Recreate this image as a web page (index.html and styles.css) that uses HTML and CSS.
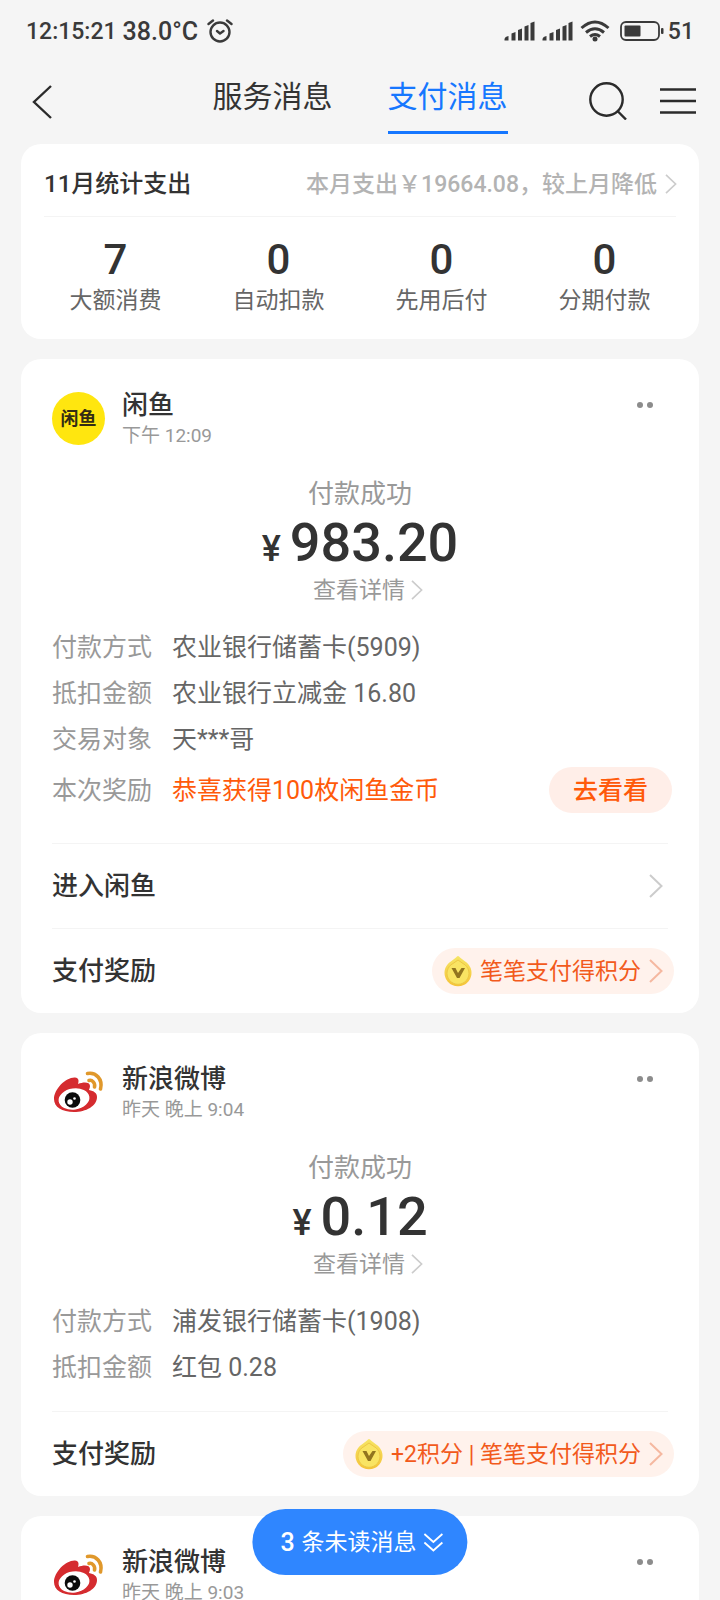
FILE: index.html
```html
<!DOCTYPE html>
<html lang="zh-CN">
<head>
<meta charset="utf-8">
<meta name="viewport" content="width=device-width, initial-scale=1">
<title>支付消息</title>
<link rel="stylesheet" href="styles.css">
</head>
<body>
<svg class="defs" aria-hidden="true">
  <defs>
    <linearGradient id="gold" x1="0" y1="0" x2="0" y2="1">
      <stop offset="0" stop-color="#f6e565"/>
      <stop offset="1" stop-color="#f5c338"/>
    </linearGradient>
    <symbol id="signal" viewBox="0 0 31 20">
      <path d="M.5 19.500V18Q1 15.500 4.500 15V19.500ZM7.500 12.500L11.500 11V19.500H7.500ZM14 9L18 7.500V19.500H14ZM20.500 5.500L24.500 4V19.500H20.500ZM26.500 2L30.500 .500V19.500H26.500Z" fill="#3a3a3a"/>
    </symbol>
    <symbol id="next" viewBox="0 0 14 24">
      <path d="M1 1L12.500 12L1 23" fill="none" stroke="currentColor" stroke-width="2"/>
    </symbol>
    <symbol id="coin" viewBox="0 0 28 32">
      <path d="M14 1Q15 1 16 2.500L20.500 6A13.500 13.500 0 1 1 7.500 6L12 2.500Q13 1 14 1Z" fill="url(#gold)"/>
      <path d="M14 5L19 8.500A11 11 0 1 1 9 8.500Z" fill="#f9e463" stroke="#edc744" stroke-width="1"/>
      <path d="M7.500 13H11.500L14 18L17.500 13H21L15.500 23H13Z" fill="#92751f"/>
    </symbol>
    <symbol id="weibo" viewBox="0 0 53 53">
      <path d="M2 33C2 23 14 11 23 11.500C27 12 27 15 26 18C32 15.500 38 16 38 20C38 22 37 23 37 24C42 25 45 27 45 31C45 40 34 46 22 46C10 46 2 41 2 33Z" fill="#d52b2f"/>
      <ellipse cx="22" cy="33" rx="15.500" ry="10.500" transform="rotate(-8 22 33)" fill="#fff"/>
      <circle cx="20.500" cy="34" r="7.800" fill="#0b0b0b"/>
      <circle cx="18" cy="36" r="2.700" fill="#fff"/>
      <circle cx="22.500" cy="32.500" r="1.300" fill="#fff"/>
      <path d="M35.500 7.500C44 6 51 13 48.500 23M37 14.500C40 13.500 43.500 17 42.500 21" fill="none" stroke="#e0982b" stroke-width="3.600" stroke-linecap="round"/>
    </symbol>
  </defs>
</svg>

<div class="status">
  <span class="status-time">12:15:21</span>
  <span class="status-temp">38.0°C</span>
  <svg class="alarm" viewBox="0 0 26 24" aria-hidden="true"><g fill="none" stroke="#3a3a3a" stroke-width="2.400" stroke-linecap="round" stroke-linejoin="round"><circle cx="13" cy="13" r="9.500"/><path d="M10 12L13 14.500L16.500 12M1.500 5L6 1.500M24.500 5L20 1.500"/></g></svg>
  <div class="status-right">
    <svg class="signal" aria-hidden="true"><use href="#signal"/></svg>
    <svg class="signal" aria-hidden="true"><use href="#signal"/></svg>
    <svg class="wifi" viewBox="0 0 30 22" aria-hidden="true"><g fill="none" stroke="#3a3a3a" stroke-width="3"><path d="M1.500 8Q15 -4 28.500 8M6 12.500Q15 5 24 12.500M10 16.500Q15 12.500 20 16.500"/></g><circle cx="15" cy="19" r="2.500" fill="#3a3a3a"/></svg>
    <svg class="battery" viewBox="0 0 44 20" aria-hidden="true"><rect x="1" y="1" width="38" height="18" rx="5" fill="none" stroke="#3a3a3a" stroke-width="1.800"/><rect x="4.500" y="4.500" width="16" height="11" rx="1" fill="#3a3a3a"/><rect x="41" y="7" width="2.500" height="6" rx="1" fill="#3a3a3a"/></svg>
    <span class="status-level">51</span>
  </div>
</div>

<header class="header">
  <button class="icon-btn back" type="button" aria-label="返回"><svg width="22" height="36" viewBox="0 0 22 36"><path d="M20 2L3 18L20 34" fill="none" stroke="#2b2b2b" stroke-width="2.400"/></svg></button>
  <nav class="tabs">
    <a class="tab" href="#service">服务消息</a>
    <a class="tab tab-on" href="#pay" aria-current="page">支付消息</a>
  </nav>
  <div class="tools">
    <button class="icon-btn" type="button" aria-label="搜索"><svg width="38" height="38" viewBox="0 0 38 38"><g fill="none" stroke="#2b2b2b" stroke-width="2.400"><circle cx="17.500" cy="17.500" r="16.200"/><path d="M28.500 29L37 37.500"/></g></svg></button>
    <button class="icon-btn" type="button" aria-label="菜单"><svg width="36" height="26" viewBox="0 0 36 26"><path d="M0 1.500H36M0 13H36M0 24.500H36" stroke="#2b2b2b" stroke-width="2.400"/></svg></button>
  </div>
</header>

<main class="list" id="pay">
  <section class="card stats">
    <div class="stats-head">
      <h2 class="stats-title">11月统计支出</h2>
      <a class="stats-more" href="#stats">本月支出￥19664.08，较上月降低<svg class="next-s" aria-hidden="true"><use href="#next"/></svg></a>
    </div>
    <hr class="rule rule-wide">
    <div class="stats-grid">
      <div class="stat"><span class="stat-num">7</span><span class="stat-label">大额消费</span></div>
      <div class="stat"><span class="stat-num">0</span><span class="stat-label">自动扣款</span></div>
      <div class="stat"><span class="stat-num">0</span><span class="stat-label">先用后付</span></div>
      <div class="stat"><span class="stat-num">0</span><span class="stat-label">分期付款</span></div>
    </div>
  </section>

  <article class="card">
    <div class="head">
      <div class="avatar avatar-fish">闲鱼</div>
      <div class="who"><h2 class="name">闲鱼</h2><p class="time">下午 12:09</p></div>
      <button class="more" type="button" aria-label="更多"><svg width="16" height="6" viewBox="0 0 16 6"><circle cx="3" cy="3" r="3"/><circle cx="13" cy="3" r="3"/></svg></button>
    </div>
    <div class="result">
      <p class="state">付款成功</p>
      <p class="amount"><span class="yen">¥</span>983.20</p>
      <a class="detail" href="#detail">查看详情<svg class="next-s" aria-hidden="true"><use href="#next"/></svg></a>
    </div>
    <dl class="rows">
      <div class="row"><dt>付款方式</dt><dd>农业银行储蓄卡(5909)</dd></div>
      <div class="row"><dt>抵扣金额</dt><dd>农业银行立减金 16.80</dd></div>
      <div class="row"><dt>交易对象</dt><dd>天***哥</dd></div>
      <div class="row row-prize"><dt>本次奖励</dt><dd>恭喜获得100枚闲鱼金币</dd><dd class="row-act"><button class="go" type="button">去看看</button></dd></div>
    </dl>
    <hr class="rule">
    <a class="enter" href="#enter">进入闲鱼<svg class="next-m" aria-hidden="true"><use href="#next"/></svg></a>
    <hr class="rule">
    <div class="reward">
      <h3 class="reward-title">支付奖励</h3>
      <a class="points" href="#points"><svg class="coin" aria-hidden="true"><use href="#coin"/></svg>笔笔支付得积分<svg class="next-m" aria-hidden="true"><use href="#next"/></svg></a>
    </div>
  </article>

  <article class="card">
    <div class="head">
      <svg class="avatar" aria-hidden="true"><use href="#weibo"/></svg>
      <div class="who"><h2 class="name">新浪微博</h2><p class="time">昨天 晚上 9:04</p></div>
      <button class="more" type="button" aria-label="更多"><svg width="16" height="6" viewBox="0 0 16 6"><circle cx="3" cy="3" r="3"/><circle cx="13" cy="3" r="3"/></svg></button>
    </div>
    <div class="result">
      <p class="state">付款成功</p>
      <p class="amount"><span class="yen">¥</span>0.12</p>
      <a class="detail" href="#detail2">查看详情<svg class="next-s" aria-hidden="true"><use href="#next"/></svg></a>
    </div>
    <dl class="rows">
      <div class="row"><dt>付款方式</dt><dd>浦发银行储蓄卡(1908)</dd></div>
      <div class="row"><dt>抵扣金额</dt><dd>红包 0.28</dd></div>
    </dl>
    <hr class="rule">
    <div class="reward">
      <h3 class="reward-title">支付奖励</h3>
      <a class="points" href="#points2"><svg class="coin" aria-hidden="true"><use href="#coin"/></svg>+2积分 | 笔笔支付得积分<svg class="next-m" aria-hidden="true"><use href="#next"/></svg></a>
    </div>
  </article>

  <article class="card card-last">
    <div class="head">
      <svg class="avatar" aria-hidden="true"><use href="#weibo"/></svg>
      <div class="who"><h2 class="name">新浪微博</h2><p class="time">昨天 晚上 9:03</p></div>
      <button class="more" type="button" aria-label="更多"><svg width="16" height="6" viewBox="0 0 16 6"><circle cx="3" cy="3" r="3"/><circle cx="13" cy="3" r="3"/></svg></button>
    </div>
  </article>
</main>

<button class="unread" type="button"><b class="unread-num">3</b>条未读消息<svg width="20" height="19" viewBox="0 0 20 19" aria-hidden="true"><path d="M1 1L10 9L19 1M1 9.500L10 17.500L19 9.500" fill="none" stroke="#fff" stroke-width="1.800"/></svg></button>
</body>
</html>
```
FILE: styles.css
```css
* { box-sizing: border-box; }

body {
  margin: 0;
  height: 100vh;
  display: flex;
  flex-direction: column;
  overflow: hidden;
  background: #f5f5f5;
  color: #333;
  font-family: Roboto, "Noto Sans CJK SC", sans-serif;
  font-size: 25px;
}

h2, h3, p, dl, dd { margin: 0; }
h2, h3 { font-weight: 500; }
a { color: inherit; text-decoration: none; }
button { border: 0; padding: 0; background: none; color: inherit; font: inherit; cursor: pointer; }
svg { display: block; flex: none; }
.defs { position: absolute; width: 0; height: 0; }

.status {
  flex: none;
  height: 62px;
  padding: 0 26px;
  display: flex;
  align-items: center;
  color: #3a3a3a;
  font-weight: 500;
}
.status-time { font-size: 23px; }
.status-temp { margin-left: 6px; }
.alarm { width: 26px; height: 24px; margin-left: 9px; }
.status-right { margin-left: auto; display: flex; align-items: center; gap: 7px; }
.signal { width: 31px; height: 20px; }
.wifi { width: 30px; height: 22px; }
.battery { width: 44px; height: 20px; margin-left: 3px; }
.status-level { font-size: 23px; margin-left: -3px; }

.header {
  flex: none;
  height: 82px;
  padding: 0 24px 0 31px;
  display: grid;
  grid-template-columns: auto 1fr auto;
}
.icon-btn { display: flex; align-items: center; }
.back { height: 80px; }
.tabs { display: flex; justify-content: center; gap: 55px; padding-left: 78px; }
.tab { height: 72px; font-size: 30px; line-height: 70px; }
.tab-on { color: #1677ff; border-bottom: 3px solid #1677ff; }
.tools { height: 78px; display: flex; align-items: center; justify-content: flex-end; gap: 33px; }

.list {
  flex: 1;
  min-height: 0;
  overflow: hidden;
  padding: 0 21px;
  display: flex;
  flex-direction: column;
  gap: 20px;
}
.card { flex: none; background: #fff; border-radius: 20px; }
.card-last { padding-bottom: 40px; }
.rule { height: 1px; margin: 0 31px; border: 0; background: #f4f4f4; }
.rule-wide { margin: 0 23px; }

.stats { padding-bottom: 22px; }
.stats-head {
  height: 72px;
  padding: 8px 22px 0 23px;
  display: flex;
  align-items: center;
  justify-content: space-between;
  line-height: 1;
}
.stats-title { font-size: 24px; }
.stats-more { display: flex; align-items: center; gap: 8px; color: #b3b3b3; font-size: 23px; font-weight: 500; }
.stats-grid { padding: 17px 13px 0; display: grid; grid-template-columns: repeat(4, 1fr); }
.stat { display: flex; flex-direction: column; align-items: center; }
.stat-num { font-size: 42px; font-weight: 500; line-height: 51px; }
.stat-label { font-size: 23px; line-height: 32px; color: #666; }

.next-s { width: 12px; height: 20px; color: #ccc; }
.next-m { width: 14px; height: 24px; color: #ccc; }

.head { padding: 28px 46px 0 31px; display: flex; align-items: center; }
.avatar { width: 53px; height: 53px; margin-right: 17px; }
.avatar-fish {
  border-radius: 50%;
  background: #ffe60f;
  color: #332c14;
  font-size: 18px;
  font-weight: 700;
  line-height: 53px;
  text-align: center;
}
.name { font-size: 26px; line-height: 36px; }
.time { font-size: 19px; line-height: 26px; color: #999; }
.more { align-self: flex-start; margin-left: auto; height: 36px; display: flex; align-items: center; fill: #8c8c8c; }

.result { padding-top: 27px; display: flex; flex-direction: column; align-items: center; color: #999; }
.state { font-size: 26px; line-height: 36px; }
.amount {
  height: 63px;
  display: flex;
  align-items: baseline;
  gap: 9px;
  color: #333;
  font-size: 54px;
  font-weight: 500;
  line-height: 62px;
}
.yen { font-size: 36px; line-height: 1; }
.detail { height: 30px; margin-left: 16px; display: flex; align-items: center; gap: 6px; font-size: 23px; line-height: 1; }

.rows { padding: 19px 27px 21px 31px; }
.row { height: 46px; display: flex; align-items: center; line-height: 1; color: #666; }
.row dt { width: 120px; color: #999; }
.row-prize { margin: 5px 0 9px; color: #ff5a0a; }
.row-act { margin-left: auto; }
.go { display: block; height: 46px; padding: 0 24px; border-radius: 23px; background: #ffeee8; font-weight: 500; line-height: 1; }

.enter, .reward {
  display: flex;
  align-items: center;
  justify-content: space-between;
  font-size: 26px;
  font-weight: 500;
  line-height: 1;
}
.enter { height: 84px; padding: 0 36px 0 31px; }
.reward { height: 84px; padding: 0 25px 0 31px; }
.reward-title { font-size: 26px; }
.points {
  height: 46px;
  padding: 0 11px 0 12px;
  border-radius: 23px;
  display: flex;
  align-items: center;
  gap: 8px;
  background: #fff2ec;
  color: #f25a1c;
  font-size: 23px;
  font-weight: 400;
}
.points .next-m { color: #f5b8a0; }
.coin { width: 28px; height: 32px; }

.unread {
  position: fixed;
  left: 50%;
  bottom: 25px;
  transform: translateX(-50%);
  height: 66px;
  padding: 0 24px 0 28px;
  border-radius: 33px;
  display: flex;
  align-items: center;
  gap: 7px;
  background: #2f86ff;
  color: #fff;
  font-size: 23px;
  line-height: 1;
  white-space: nowrap;
}
.unread-num { font-size: 25px; font-weight: 500; }
```
